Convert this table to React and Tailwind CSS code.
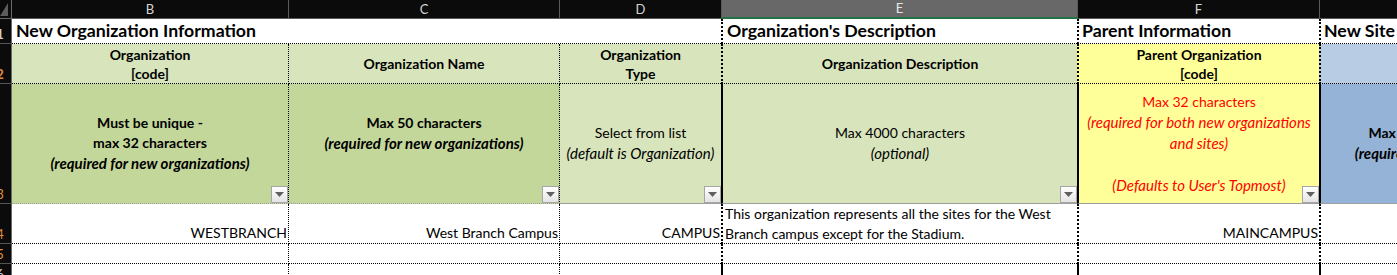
import React from "react";

const Drop = () => (
  <div className="absolute right-0 bottom-0 w-[17px] h-[17px] border border-[#a6a6a6] bg-gradient-to-b from-white to-[#e4e4e4] flex items-center justify-center">
    <svg width="9" height="5" viewBox="0 0 9 5">
      <polygon points="0,0 9,0 4.5,5" fill="#5f5f5f" />
    </svg>
  </div>
);

const RowNum = ({ n, h, color, last }) => (
  <div
    className={`w-[12px] shrink-0 bg-[#0b0b0b] border-r border-r-[#6a6a6a] ${last ? "" : "border-b border-b-[#555555]"} overflow-hidden flex items-end pb-[1px] ${h}`}
  >
    <div className={`-ml-[12px] w-[24px] shrink-0 text-center text-[13px] leading-[16px] ${color}`}>{n}</div>
  </div>
);

const It = ({ children }) => <span className="italic text-[15px]">{children}</span>;

export default function App() {
  const dotR = "border-r border-dotted border-r-black";
  const thickL = "border-l-2 border-l-black";
  return (
    <div className="w-[1397px] h-[275px] overflow-hidden bg-white font-['Lato','Liberation_Sans',sans-serif] text-black">
      <div className="w-[1700px]">
        {/* column header row */}
        <div className="flex h-[19px]">
          <div className="w-[12px] shrink-0 bg-[#0b0b0b] border-r border-b border-[#6a6a6a] relative">
            <svg className="absolute left-0 top-0" width="11" height="18" viewBox="0 0 11 18">
              <polygon points="8,3 8,16 0,16" fill="#5c5c5c" />
            </svg>
          </div>
          <div className="w-[277px] shrink-0 bg-[#0b0b0b] border-r border-b border-[#5a5a5a] text-[#d4d4d4] text-[13px] leading-[18px] text-center">B</div>
          <div className="w-[271px] shrink-0 bg-[#0b0b0b] border-r border-b border-[#5a5a5a] text-[#d4d4d4] text-[13px] leading-[18px] text-center">C</div>
          <div className="w-[162px] shrink-0 bg-[#0b0b0b] border-r border-b border-[#5a5a5a] text-[#d4d4d4] text-[13px] leading-[18px] text-center">D</div>
          <div className="w-[356px] shrink-0 bg-[#686868] border-r border-r-[#5a5a5a] border-b-2 border-b-[#217346] text-[#e8e8e8] text-[13px] leading-[17px] text-center">E</div>
          <div className="w-[242px] shrink-0 bg-[#0b0b0b] border-r border-b border-[#5a5a5a] text-[#d4d4d4] text-[13px] leading-[18px] text-center">F</div>
          <div className="w-[212px] shrink-0 bg-[#0b0b0b] border-b border-[#5a5a5a] text-[#d4d4d4] text-[13px] leading-[18px] text-center">G</div>
        </div>

        {/* row 1 */}
        <div className="flex h-[25px] font-bold text-[17.7px] leading-[24px]">
          <RowNum n="1" h="h-[25px]" color="text-[#cfcfcf]" />
          <div className="w-[709px] shrink-0 border-b border-dotted border-b-black pl-[4px]">
            New Organization Information
          </div>
          <div className={`w-[356px] shrink-0 ${thickL} border-b border-dotted border-b-black pl-[4px]`}>
            Organization's Description
          </div>
          <div className={`w-[242px] shrink-0 ${thickL} border-b border-dotted border-b-black pl-[3px]`}>
            Parent Information
          </div>
          <div className={`w-[212px] shrink-0 ${thickL} border-b border-dotted border-b-black pl-[3px]`}>
            New Site Information
          </div>
        </div>

        {/* row 2 */}
        <div className="flex h-[40px] font-bold text-[14px] leading-[19px]">
          <RowNum n="2" h="h-[40px]" color="text-[#e0903c]" />
          <div className={`w-[277px] shrink-0 bg-[#d8e4bc] ${dotR} border-b border-b-black flex items-center justify-center text-center`}>
            <div>Organization<br />[code]</div>
          </div>
          <div className={`w-[271px] shrink-0 bg-[#d8e4bc] ${dotR} border-b border-b-black flex items-center justify-center text-center`}>
            Organization Name
          </div>
          <div className="w-[161px] shrink-0 bg-[#d8e4bc] border-b border-dotted border-b-black flex items-center justify-center text-center">
            <div>Organization<br />Type</div>
          </div>
          <div className={`w-[356px] shrink-0 bg-[#d8e4bc] ${thickL} border-b border-dotted border-b-black flex items-center justify-center text-center`}>
            Organization Description
          </div>
          <div className={`w-[242px] shrink-0 bg-[#ffff99] ${thickL} border-b border-dotted border-b-black flex items-center justify-center text-center`}>
            <div>Parent Organization<br />[code]</div>
          </div>
          <div className={`w-[212px] shrink-0 bg-[#b8cce4] ${thickL} border-b border-dotted border-b-black flex items-center justify-center text-center`}>
            <div>Site<br />[code]</div>
          </div>
        </div>

        {/* row 3 */}
        <div className="flex h-[120px] text-[14px] leading-[20px]">
          <RowNum n="3" h="h-[120px]" color="text-[#e0903c]" />
          <div className={`relative w-[277px] shrink-0 bg-[#c4d79b] ${dotR} border-b border-b-[#9e9e9e] flex items-center justify-center text-center font-bold`}>
            <div>Must be unique -<br />max 32 characters<br /><It>(required for new organizations)</It></div>
            <Drop />
          </div>
          <div className={`relative w-[271px] shrink-0 bg-[#c4d79b] ${dotR} border-b border-b-[#9e9e9e] flex items-center justify-center text-center font-bold`}>
            <div>Max 50 characters<br /><It>(required for new organizations)</It><br />&nbsp;</div>
            <Drop />
          </div>
          <div className="relative w-[161px] shrink-0 bg-[#d8e4bc] border-b border-b-[#9e9e9e] flex items-center justify-center text-center">
            <div>Select from list<br /><It>(default is Organization)</It></div>
            <Drop />
          </div>
          <div className={`relative w-[356px] shrink-0 bg-[#d8e4bc] ${thickL} border-b border-b-[#9e9e9e] flex items-center justify-center text-center`}>
            <div>Max 4000 characters<br /><It>(optional)</It></div>
            <Drop />
          </div>
          <div className={`relative w-[242px] shrink-0 bg-[#ffff99] ${thickL} border-b border-b-[#9e9e9e] flex items-center justify-center text-center text-[#ff0000]`}>
            <div>Max 32 characters<br /><It>(required for both new organizations<br />and sites)<br />&nbsp;<br />(Defaults to User's Topmost)</It></div>
            <Drop />
          </div>
          <div className={`relative w-[212px] shrink-0 bg-[#95b3d7] ${thickL} border-b border-b-[#9e9e9e] flex items-center justify-center text-center font-bold`}>
            <div>Max 32 characters<br /><It>(required for new sites)</It></div>
          </div>
        </div>

        {/* row 4 */}
        <div className="flex h-[40px] text-[14px] leading-[20px]">
          <RowNum n="4" h="h-[40px]" color="text-[#e0903c]" />
          <div className={`w-[277px] shrink-0 ${dotR} border-b border-dotted border-b-black flex items-end justify-end pr-[1px]`}>WESTBRANCH</div>
          <div className={`w-[271px] shrink-0 ${dotR} border-b border-dotted border-b-black flex items-end justify-end pr-[1px]`}>West Branch Campus</div>
          <div className="w-[161px] shrink-0 border-b border-dotted border-b-black flex items-end justify-end pr-[1px]">CAMPUS</div>
          <div className={`w-[356px] shrink-0 ${thickL} border-b border-dotted border-b-black pl-[2px] whitespace-nowrap`}>
            This organization represents all the sites for the West<br />Branch campus except for the Stadium.
          </div>
          <div className={`w-[242px] shrink-0 ${thickL} border-b border-dotted border-b-black flex items-end justify-end pr-[1px]`}>MAINCAMPUS</div>
          <div className={`w-[212px] shrink-0 ${thickL} border-b border-dotted border-b-black`}></div>
        </div>

        {/* row 5 */}
        <div className="flex h-[20px]">
          <RowNum n="5" h="h-[20px]" color="text-[#e0903c]" />
          <div className={`w-[277px] shrink-0 ${dotR} border-b border-dotted border-b-black`}></div>
          <div className={`w-[271px] shrink-0 ${dotR} border-b border-dotted border-b-black`}></div>
          <div className="w-[161px] shrink-0 border-b border-dotted border-b-black"></div>
          <div className={`w-[356px] shrink-0 ${thickL} border-b border-dotted border-b-black`}></div>
          <div className={`w-[242px] shrink-0 ${thickL} border-b border-dotted border-b-black`}></div>
          <div className={`w-[212px] shrink-0 ${thickL} border-b border-dotted border-b-black`}></div>
        </div>

        {/* row 6 */}
        <div className="flex h-[20px]">
          <RowNum n="6" h="h-[20px]" color="text-[#cfcfcf]" />
          <div className={`w-[277px] shrink-0 ${dotR}`}></div>
          <div className={`w-[271px] shrink-0 ${dotR}`}></div>
          <div className="w-[161px] shrink-0"></div>
          <div className={`w-[356px] shrink-0 ${thickL}`}></div>
          <div className={`w-[242px] shrink-0 ${thickL}`}></div>
          <div className={`w-[212px] shrink-0 ${thickL}`}></div>
        </div>
      </div>
    </div>
  );
}
